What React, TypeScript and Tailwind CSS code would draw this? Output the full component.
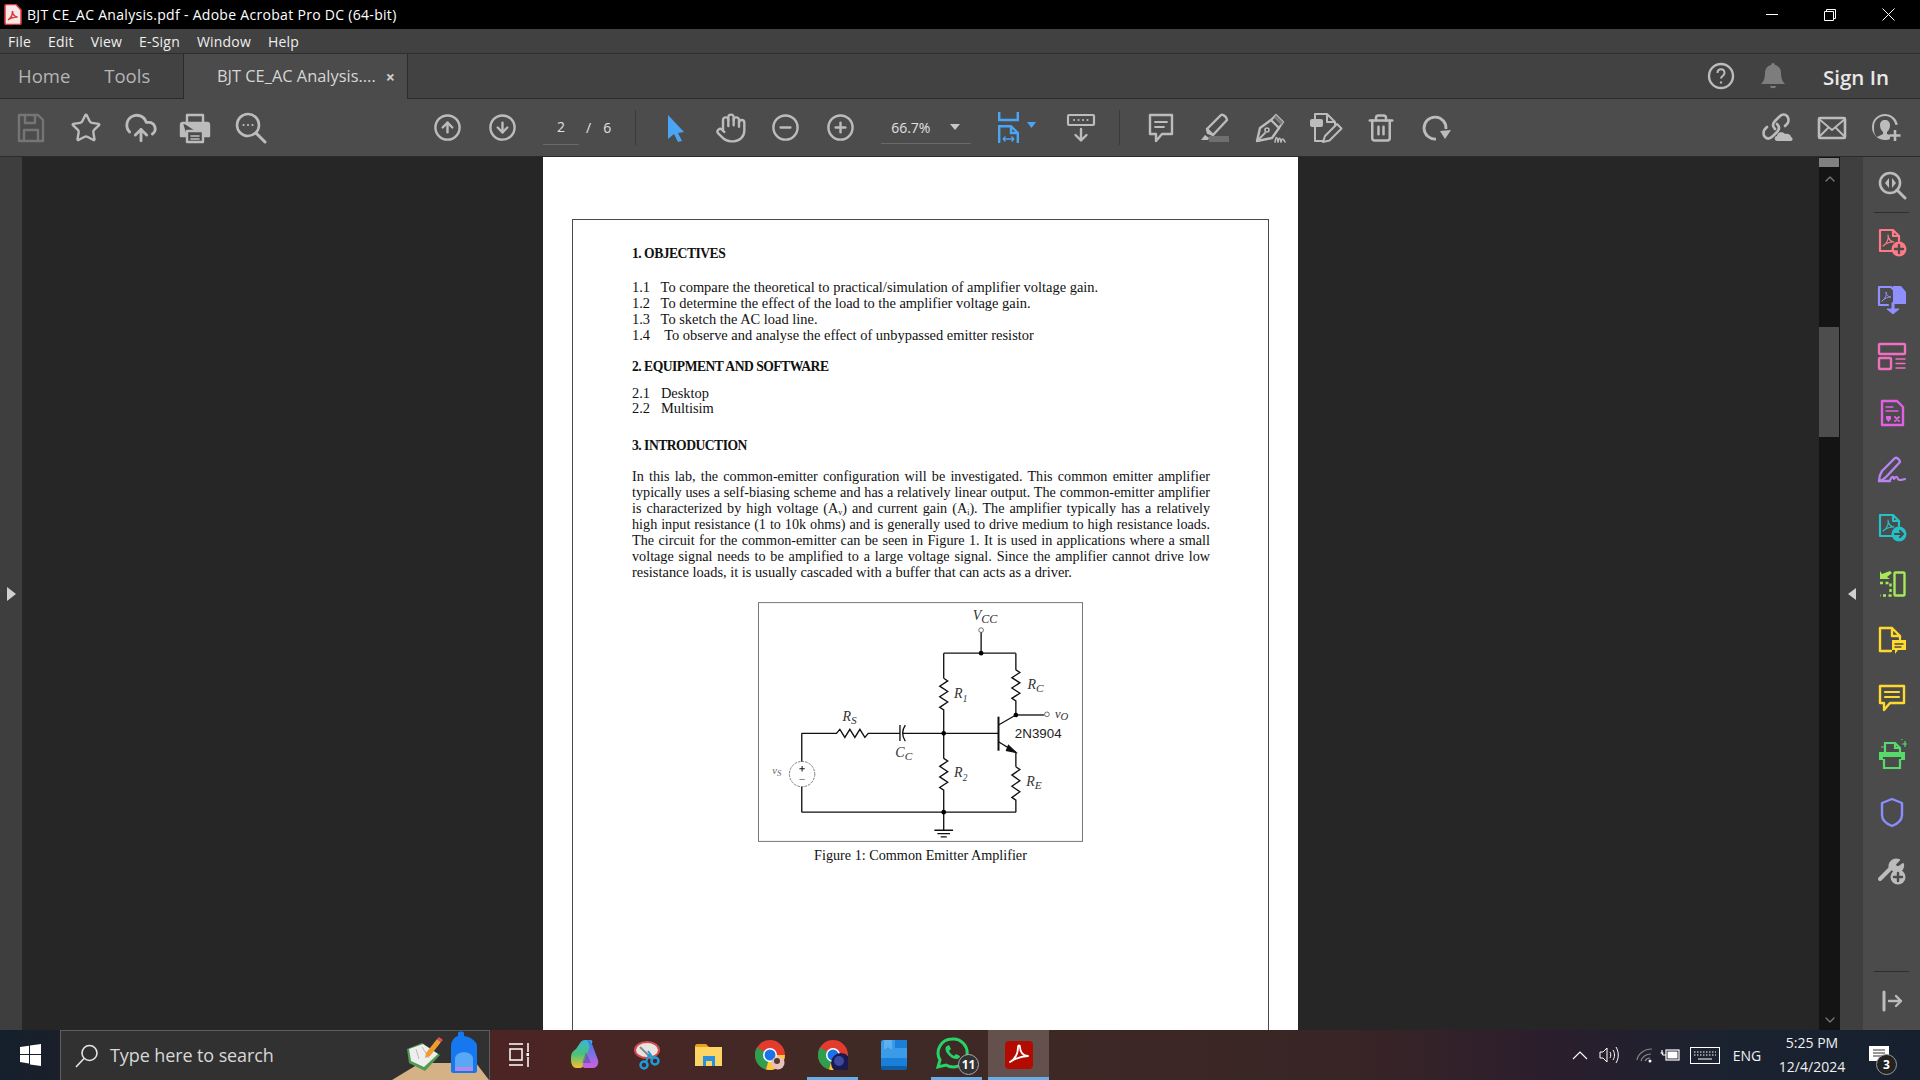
import React from "react";
import { Star, CloudUpload, CircleArrowUp, CircleArrowDown, Hand, CircleMinus, CirclePlus, Trash2, ChevronUp, ChevronDown } from "lucide-react";

const ui = "font-['Open_Sans','Noto_Sans',sans-serif]";

function S({ w = 36, h = 36, vb, children, className = "" }: { w?: number; h?: number; vb?: string; children: React.ReactNode; className?: string }) {
  return (
    <svg width={w} height={h} viewBox={vb ?? `0 0 ${w} ${h}`} fill="none" stroke="currentColor" strokeWidth={2.4} strokeLinecap="round" strokeLinejoin="round" className={className}>
      {children}
    </svg>
  );
}

const Slot = ({ x, children }: { x: number; children: React.ReactNode }) => (
  <div className="flex h-full items-center justify-center" style={{ width: x }}>
    {children}
  </div>
);

function Save() {
  return <S><path d="M6 5h19l5 5v21H6z" /><path d="M12 5v8h10V5M11 31v-11h14v11" /></S>;
}
function Printer() {
  return (
    <S>
      <path d="M10 13V5h16v8" />
      <path d="M6 13h24a2 2 0 0 1 2 2v11h-6M10 26H4V15a2 2 0 0 1 2-2" fill="currentColor" />
      <rect x="10" y="21" width="16" height="11" fill="#4c4c4c" />
      <path d="M14 26h8M14 29h8" strokeWidth={1.6} />
    </S>
  );
}
function SearchDots() {
  return (
    <S>
      <circle cx="15" cy="15" r="11" strokeWidth={2.6} />
      <path d="M23 23l9 9" strokeWidth={3} />
      <path d="M10.5 15h.1M15 15h.1M19.5 15h.1" strokeWidth={2.2} />
    </S>
  );
}
function Cursor() {
  return <svg width="22" height="30" viewBox="0 0 22 30"><path d="M3 2l16 17-6 1 4 8-4 1-4-8-6 5z" fill="#4aa5f5" /></svg>;
}
function Fit() {
  return (
    <svg width="21" height="31" viewBox="0 0 21 31" fill="none" stroke="#4aa5f5" strokeWidth="2.4">
      <path d="M1.200 0v8h18.600V0" />
      <path d="M1.200 31V14.200H13l6.800 6.800v10M13 14.200V21h6.800" />
      <path d="M5 27h11M5 27l2.500-2.500M5 27l2.500 2.500M16 27l-2.500-2.500M16 27l-2.500 2.500" strokeWidth="1.400" />
    </svg>
  );
}
function Kb() {
  return (
    <S w={30} h={32}>
      <rect x="2" y="3" width="26" height="10" rx="1" strokeWidth={2.2} />
      <path d="M8 8h.1M12.500 8h.1M17 8h.1M21.500 8h.1" strokeWidth={2} />
      <path d="M15 17v11M9.500 23l5.500 5.500 5.500-5.500" />
    </S>
  );
}
function Comment() {
  return (
    <S w={28} h={32}>
      <path d="M3 3h22v19H15l-6 7v-7H3z" />
      <path d="M8 10h12M8 15h9" strokeWidth={1.8} />
    </S>
  );
}
function Highlight() {
  return (
    <S w={32} h={32}>
      <path d="M8 21l-1-4L21 3c2-1 6 2 6 5L13 23z" />
      <path d="M7 17l6 6" />
      <path d="M1 28l4-5 4 3-1 2z" fill="currentColor" stroke="none" />
      <rect x="9" y="24" width="20" height="6" fill="#6f6f6f" stroke="none" />
    </S>
  );
}
function Pen() {
  return (
    <S w={34} h={32}>
      <path d="M3 29l3-13 11-8 8 8-7 10z" />
      <path d="M3 29l8-8" strokeWidth={1.8} />
      <circle cx="13" cy="18" r="2" strokeWidth={1.6} />
      <path d="M17 8l5-5 7 7-4 6" strokeWidth={2.2} />
      <path d="M22 3l7 7-2 3-7-7z" fill="#7a7a7a" stroke="none" />
      <path d="M21 30c1-6 2-6 3 0 1-5 2-5 3 0 1-4 2-4 4 0" strokeWidth={1.6} />
    </S>
  );
}
function EditDoc() {
  return (
    <S w={34} h={32}>
      <path d="M6 7V2h12l8 8v3M18 2v8h8" strokeWidth={2} />
      <rect x="1" y="7" width="13" height="8" rx="2" fill="currentColor" stroke="none" />
      <path d="M6 15v14h8" strokeWidth={2} />
      <path d="M14 30l2-6 12-12 4.500 4.500-12 12z" strokeWidth={2} />
    </S>
  );
}
function Rotate() {
  return (
    <svg width="30" height="30" viewBox="0 0 30 30" fill="none">
      <path d="M15 26A11 11 0 1 1 25 16" stroke="#bcbcbc" strokeWidth="2.800" />
      <path d="M19 18l11-1-6 9z" fill="#bcbcbc" />
    </svg>
  );
}
function LinkCloud() {
  return (
    <S w={34} h={34}>
      <path d="M15 18c-3-3-2-6 0-8l4-4c3-3 6-3 8-1s2 6 0 8l-2 2" strokeWidth={2.6} />
      <path d="M17 13c3 3 2 6 0 8l-4 4c-3 3-6 3-8 1s-2-6 0-8l2-2" strokeWidth={2.6} />
      <path d="M17 30c-3 0-3-5 0-5 0-4 6-5 8-2 3-1 6 1 6 3 2 0 2 4 0 4z" fill="currentColor" stroke="none" />
    </S>
  );
}
function MailBox() {
  return (
    <S w={30} h={24}>
      <rect x="2" y="2" width="26" height="20" rx="1" strokeWidth={2.6} />
      <path d="M2 3l13 11L28 3M2 21l9-9M28 21l-9-9" strokeWidth={1.8} />
    </S>
  );
}
function UserPlus() {
  return (
    <svg width="32" height="30" viewBox="0 0 32 30">
      <path d="M14 1a13 13 0 0 0 0 26c2 0 3.500-.3 5-1v-4l-3-1v-2c2-2 3-4 3-7 0-3-2-5-5-5s-5 2-5 5c0 3 1 5 3 7v2l-6 3C3 21 3 18 3 14 3 7 8 3 14 3s9 4 10.500 9l2.500-.5A13 13 0 0 0 14 1z" fill="#bcbcbc" />
      <path d="M24 17v11M18.500 22.500h11" stroke="#bcbcbc" strokeWidth="2.600" />
    </svg>
  );
}

function RightIcon({ c, children }: { c: string; children: React.ReactNode }) {
  return (
    <div className="flex h-[57.1px] w-full items-center justify-center" style={{ color: c }}>
      {children}
    </div>
  );
}

function RightPanel() {
  return (
    <div className="flex h-full w-[57px] flex-col items-center bg-[#4b4b4b]">
      <div className="flex h-[55px] w-full shrink-0 items-center justify-center text-[#bcbcbc]">
        <S w={30} h={30}>
          <circle cx="13" cy="13" r="10" strokeWidth={2.6} />
          <path d="M20 20l8 8" strokeWidth={3} />
          <path d="M12 8l-4 5 4 5zM15 8l4 5-4 5z" fill="currentColor" stroke="none" />
        </S>
      </div>
      <div className="h-px w-[35px] shrink-0 bg-[#2e2e2e]" />
      <div className="flex w-full flex-col">
        <RightIcon c="#ff7a85">
          <S w={30} h={30}>
            <path d="M18 24H3V3h13l6 6v5M16 3v6h6" strokeWidth={2.2} />
            <path d="M6 19c4-2 6-8 5-11 0 4 3 7 6 7-4 0-8 1-11 4z" strokeWidth={1.2} />
            <circle cx="22" cy="22" r="7.500" fill="currentColor" stroke="none" />
            <path d="M22 18v8M18 22h8" stroke="#4b4b4b" strokeWidth={2.4} />
          </S>
        </RightIcon>
        <RightIcon c="#8f8fff">
          <S w={32} h={32}>
            <path d="M12 22H3V4h12l3 3v4" strokeWidth={2.2} />
            <path d="M6 18c3-2 5-6 4-9 0 3 2 5 5 5-3 0-6 1-9 4z" strokeWidth={1} />
            <path d="M17 3h8l5 6v12H17z" fill="currentColor" stroke="none" />
            <path d="M16 20v6h-5l6 5 6-5h-5v-6z" fill="currentColor" stroke="currentColor" strokeWidth={1} />
          </S>
        </RightIcon>
        <RightIcon c="#f06fc0">
          <S w={30} h={30}>
            <rect x="2" y="3" width="26" height="10" rx="1" strokeWidth={2.4} />
            <rect x="2" y="17" width="12" height="11" rx="1" strokeWidth={2.4} />
            <path d="M19 18h9M19 22.500h9M19 27h9" strokeWidth={1.4} />
          </S>
        </RightIcon>
        <RightIcon c="#e35fe6">
          <S w={26} h={30}>
            <path d="M3 3h15l6 6v18H3z" strokeWidth={2.4} />
            <path d="M7 9h7M7 13h12" strokeWidth={1.4} />
            <path d="M7 18h5v3l-2.500 3L7 21z" fill="currentColor" stroke="none" />
            <path d="M16 19l4 4M20 19l-4 4" strokeWidth={1.8} />
          </S>
        </RightIcon>
        <RightIcon c="#b983f0">
          <S w={32} h={30}>
            <path d="M3 26c0-4 1-7 3-10L19 3c2-1 5 2 5 4L11 21c-2 2-5 5-8 5z" strokeWidth={2.4} />
            <path d="M3 26h11" strokeWidth={2.4} />
            <path d="M14 25c2-4 4-4 4-1 2-3 3-3 4 0 1 2 3 1 7 0" strokeWidth={2.2} />
          </S>
        </RightIcon>
        <RightIcon c="#26c0c9">
          <S w={30} h={30}>
            <path d="M16 24H3V3h13l6 6v5M16 3v6h6" strokeWidth={2.2} />
            <path d="M6 19c4-2 6-8 5-11 0 4 3 7 6 7-4 0-8 1-11 4z" strokeWidth={1.2} />
            <circle cx="22" cy="22" r="7.500" fill="currentColor" stroke="none" />
            <path d="M18 22h8M23 19l3 3-3 3" stroke="#4b4b4b" strokeWidth={2.2} />
          </S>
        </RightIcon>
        <RightIcon c="#a5ea55">
          <svg width="28" height="26" viewBox="0 0 28 26" fill="none" stroke="currentColor">
            <rect x="16.500" y="1.500" width="10" height="23" rx="1" strokeWidth="2.400" />
            <path d="M2 12h10.500v12.500H2" strokeWidth="2.400" strokeDasharray="3 2.500" />
            <path d="M12 0l2 2-5 4 3 2H2V0l2 3z" fill="currentColor" stroke="none" />
          </svg>
        </RightIcon>
        <RightIcon c="#ffd92e">
          <S w={30} h={32}>
            <path d="M14 26H3V3h12l8 8v3M15 3v8h8" strokeWidth={2.4} />
            <path d="M15 15h14v10h-8l-3 4v-4h-3z" fill="currentColor" stroke="none" />
            <path d="M18 19h8M18 22h6" stroke="#4b4b4b" strokeWidth={1.4} />
          </S>
        </RightIcon>
        <RightIcon c="#ffd92e">
          <S w={28} h={28}>
            <path d="M2 2h24v17H12l-6 7v-7H2z" strokeWidth={2.4} />
            <path d="M7 8h14M7 13h14" strokeWidth={2.2} />
          </S>
        </RightIcon>
        <RightIcon c="#57d96b">
          <svg width="30" height="32" viewBox="0 0 30 32" fill="none" stroke="currentColor" strokeWidth="2.200">
            <path d="M8 13V4h10l5 5v4M18 4v5h5" />
            <path d="M2 13h26v8h-4v-3H6v3H2z" fill="currentColor" stroke="none" />
            <path d="M7 20v9h16v-9" />
            <path d="M28 2v6M25 5h6M4 8h3M25 0v1" strokeWidth="1.200" />
          </svg>
        </RightIcon>
        <RightIcon c="#8a8cff">
          <S w={26} h={32}>
            <path d="M13 3l10 4v12c0 5-5 9-10 11C8 28 3 24 3 19V7z" strokeWidth={2.4} />
          </S>
        </RightIcon>
        <RightIcon c="#bcbcbc">
          <S w={30} h={30}>
            <path d="M3 24l11-11" strokeWidth={4} />
            <path d="M13 14c-2-6 3-11 9-9l-4 4 1 3 3 0 4-3c1 5-4 10-9 8" strokeWidth={2} fill="currentColor" />
            <circle cx="21" cy="22" r="7.500" fill="currentColor" stroke="none" />
            <path d="M21 18v8M17 22h8" stroke="#4b4b4b" strokeWidth={2.4} />
          </S>
        </RightIcon>
      </div>
      <div className="mt-auto h-px w-[35px] shrink-0 bg-[#2e2e2e]" />
      <div className="flex h-[58px] shrink-0 items-center justify-center text-[#bcbcbc]">
        <S w={22} h={24}>
          <path d="M3 3v18" strokeWidth={3} />
          <path d="M8 12h12M15 7l5 5-5 5" />
        </S>
      </div>
    </div>
  );
}

const serif = "font-['Liberation_Serif','DejaVu_Serif',serif]";

function Line({ children, just = false, h = 16, cls = "" }: { children: React.ReactNode; just?: boolean; h?: number; cls?: string }) {
  return (
    <div className={`whitespace-nowrap ${just ? "text-justify text-[14.2px] [text-align-last:justify]" : ""} ${cls}`} style={{ height: h, lineHeight: `${h}px` }}>
      {children}
    </div>
  );
}

function zig(x: number, y0: number, y1: number) {
  const step = (y1 - y0) / 12;
  let d = `M${x} ${y0}`;
  for (let i = 0; i < 6; i++) {
    d += `L${x + (i % 2 ? -12 : 12)} ${y0 + step * (2 * i + 1)}`;
  }
  return d + `L${x} ${y1}`;
}

function Circuit() {
  const w = "#111";
  return (
    <svg width="325" height="240" viewBox="55 37 973 718" className="block" fill="none" stroke={w} strokeWidth="4">
      <rect x="56.500" y="38.500" width="970" height="715" stroke="#777" strokeWidth="3" />
      <circle cx="723" cy="121" r="7" stroke="#555" strokeWidth="2.500" />
      <path d="M723 128v62M611 190h216" />
      <path d={`M611 190V265${zig(611, 265, 360)}V430`} />
      <path d={`M827 190V240${zig(827, 240, 333)}V375`} />
      <path d="M827 375h85" />
      <circle cx="920" cy="373" r="7" stroke="#555" strokeWidth="2.500" />
      <path d="M775 380v102" strokeWidth="6" />
      <path d="M611 430h164M775 405l52-30M775 455l52 32" />
      <path d="M805 466l22 21-28-6z" fill={w} />
      <path d={`M827 487V530${zig(827, 530, 630)}V666`} />
      <path d="M186 666h641M611 666v52M583 720h56M592 730h38M602 740h18" />
      <path d={`M611 430V505${zig(611, 505, 600)}V666`} />
      <path d="M186 430h104l10-12 15 24 15-24 15 24 15-24 15 24 10-12h95M480 405v48M496 405c-10 15-10 33 0 48M490 430h121" />
      <circle cx="187" cy="552" r="38" stroke="#666" strokeWidth="2.500" strokeDasharray="8 3" />
      <path d="M186 430v84M186 590v76" />
      <path d="M187 528v16M179 536h16" strokeWidth="3" />
      <path d="M179 568h16" stroke="#888" strokeWidth="3" />
      <g fill="#000" stroke="none">
        <circle cx="723" cy="190" r="7" />
        <circle cx="827" cy="375" r="7" />
        <circle cx="611" cy="430" r="7" />
        <circle cx="611" cy="666" r="7" />
      </g>
      <g fill="#333" stroke="none" fontFamily="'Liberation Serif', serif" fontStyle="italic" fontSize="42">
        <text x="698" y="92">V<tspan fontSize="36" dy="8">CC</tspan></text>
        <text x="642" y="325">R<tspan fontSize="28" dy="10">1</tspan></text>
        <text x="862" y="296">R<tspan fontSize="34" dy="10">C</tspan></text>
        <text x="308" y="393">R<tspan fontSize="34" dy="10">S</tspan></text>
        <text x="642" y="562">R<tspan fontSize="28" dy="10">2</tspan></text>
        <text x="858" y="588">R<tspan fontSize="34" dy="10">E</tspan></text>
        <text x="466" y="500">C<tspan fontSize="34" dy="10">C</tspan></text>
        <text x="944" y="384" fontSize="38">v<tspan fontSize="32" dy="5">O</tspan></text>
        <text x="98" y="552" fontSize="32" fill="#666">v<tspan fontSize="26" dy="6">S</tspan></text>
      </g>
      <text x="824" y="444" fill="#222" stroke="none" fontFamily="'Liberation Sans', sans-serif" fontSize="40">2N3904</text>
    </svg>
  );
}

const head = "font-bold text-[13.6px] tracking-[-0.5px]";

function Page() {
  return (
    <div className={`h-[873px] w-[755px] shrink-0 overflow-hidden bg-white pl-[29px] pt-[62px] text-[#111] ${serif} text-[14.45px]`}>
      <div className="h-[900px] w-[697px] border border-[#4a4a4a] pl-[59px] pt-[26px]">
        <div className="w-[578px]">
          <Line cls={head}>1. OBJECTIVES</Line>
          <div className="mt-[17px]">
            <Line>1.1&nbsp;&nbsp; To compare the theoretical to practical/simulation of amplifier voltage gain.</Line>
            <Line>1.2&nbsp;&nbsp; To determine the effect of the load to the amplifier voltage gain.</Line>
            <Line>1.3&nbsp;&nbsp; To sketch the AC load line.</Line>
            <Line>1.4&nbsp;&nbsp;&nbsp; To observe and analyse the effect of unbypassed emitter resistor</Line>
          </div>
          <Line cls={`mt-[16px] ${head}`}>2. EQUIPMENT AND SOFTWARE</Line>
          <div className="mt-[10px]">
            <Line>2.1&nbsp;&nbsp; Desktop</Line>
            <Line h={15}>2.2&nbsp;&nbsp; Multisim</Line>
          </div>
          <Line cls={`mt-[22px] ${head}`}>3. INTRODUCTION</Line>
          <div className="mt-[14px]">
            <Line just>In this lab, the common-emitter configuration will be investigated. This common emitter amplifier</Line>
            <Line just>typically uses a self-biasing scheme and has a relatively linear output. The common-emitter amplifier</Line>
            <Line just>is characterized by high voltage (A<sub className="text-[8px]">v</sub>) and current gain (A<sub className="text-[8px]">i</sub>). The amplifier typically has a relatively</Line>
            <Line just>high input resistance (1 to 10k ohms) and is generally used to drive medium to high resistance loads.</Line>
            <Line just>The circuit for the common-emitter can be seen in Figure 1. It is used in applications where a small</Line>
            <Line just>voltage signal needs to be amplified to a large voltage signal. Since the amplifier cannot drive low</Line>
            <Line>resistance loads, it is usually cascaded with a buffer that can acts as a driver.</Line>
          </div>
        </div>
        <div className="ml-[126px] mt-[22px] w-[325px]">
          <Circuit />
          <Line cls="mt-[5px] text-center text-[14.2px]">Figure 1: Common Emitter Amplifier</Line>
        </div>
      </div>
    </div>
  );
}

function Windows() {
  return (
    <svg width="21" height="22" viewBox="0 0 21 22" fill="#fff">
      <path d="M0 3l9-1.300V10H0zM10 1.500L21 0v10H10zM0 11h9v8.500L0 18zM10 11h11v11l-11-1.600z" />
    </svg>
  );
}

function Chrome({ extra }: { extra: React.ReactNode }) {
  return (
    <svg width="30" height="30" viewBox="0 0 30 30">
      <circle cx="15" cy="15" r="15" fill="#e33b2e" />
      <path d="M15 15L2 7.500A15 15 0 0 0 11 29.500z" fill="#2e9e4f" />
      <path d="M15 15h15A15 15 0 0 1 11 29.500z" fill="#fcc934" />
      <circle cx="15" cy="15" r="7" fill="#fff" />
      <circle cx="15" cy="15" r="5.500" fill="#1a73e8" />
      {extra}
    </svg>
  );
}

function Copilot() {
  return (
    <svg width="32" height="32" viewBox="0 0 32 32">
      <defs>
        <linearGradient id="cpA" x1="0" y1="0" x2="0" y2="1">
          <stop offset="0" stopColor="#38b6d8" />
          <stop offset="0.5" stopColor="#4ac27a" />
          <stop offset="1" stopColor="#f5c030" />
        </linearGradient>
        <linearGradient id="cpB" x1="0" y1="0" x2="0" y2="1">
          <stop offset="0" stopColor="#2f7fe8" />
          <stop offset="1" stopColor="#d060e0" />
        </linearGradient>
      </defs>
      <path d="M3 18c0-4 2-6 5-8l4-6c1-2 3-3 5-3h5c2 0 3 1 2 3l-8 22c-1 2-2 3-4 3H8c-3 0-5-4-5-8z" fill="url(#cpA)" />
      <path d="M19 1c3 0 4 2 5 4l6 16c1 4-1 8-5 8h-8c-2 0-3-2-2-4l6-15c1-3 0-6-2-9z" fill="url(#cpB)" />
      <path d="M14 24l4-11 5 11z" fill="#2c2f8f" opacity="0.35" />
    </svg>
  );
}

function Taskbar() {
  return (
    <div className={`flex h-[50px] shrink-0 items-center bg-[linear-gradient(90deg,#14202c_0%,#1a1f2a_3%,#4c2424_26%,#3f2a26_45%,#3a2526_70%,#2c1e2c_80%,#1a2230_90%,#17202e_100%)] text-white ${ui}`}>
      <div className="flex h-full w-[60px] shrink-0 items-center justify-center"><Windows /></div>
      <div className="flex h-full w-[430px] shrink-0 items-center overflow-hidden border border-b-0 border-[#5e5e5e] bg-[#313131] pl-[12px]">
        <svg width="28" height="28" viewBox="0 0 28 28" fill="none" stroke="#e6e6e6" strokeWidth="1.600"><circle cx="16.500" cy="11" r="7.500" /><path d="M11 16.500L3 25" /></svg>
        <span className="ml-[9px] text-[18px] tracking-[-0.1px] text-[#d8d8d8]">Type here to search</span>
        <svg width="97" height="49" viewBox="0 0 97 49" className="ml-auto shrink-0">
          <path d="M0 49l28-17h56l13 17z" fill="#d4b285" />
          <path d="M15 18l15-6 18 12-15 16-16-8z" fill="#4f9b4f" />
          <path d="M17 18l14-5 15 10-14 13-13-6z" fill="#eee" />
          <path d="M24 18l3 10M30 16l7 11" stroke="#bbb" strokeWidth="1" />
          <path d="M34 22l11-14 4 3-11 14-5 2z" fill="#f09a30" />
          <path d="M45 8l2-2 4 3-2 2z" fill="#e05050" />
          <path d="M59 40V15c0-6 5-10 7-10V2c0-2 6-2 6 0v3c3 0 13 4 13 10v25c0 1-1 2-2 2H61c-1 0-2-1-2-2z" fill="#1578ee" />
          <path d="M63 40V28c0-9 18-9 18 0v12z" fill="#5aa8f5" />
          <path d="M63 36h18v4H63z" fill="#b08ae8" />
        </svg>
      </div>
      <div className="flex h-full w-[58px] shrink-0 items-center justify-center">
        <svg width="20" height="24" viewBox="0 0 20 24" fill="none" stroke="#fff" strokeWidth="1.500"><path d="M0 1h14M0 22h14M1 6h12v11H1zM19 0v9M19 14v10" /><rect x="17.500" y="10" width="3" height="3" fill="#fff" stroke="none" /></svg>
      </div>
      <div className="flex h-full w-[72px] shrink-0 items-center justify-center"><Copilot /></div>
      <div className="flex h-full w-[54px] shrink-0 items-center justify-center">
        <svg width="30" height="32" viewBox="0 0 30 32" fill="none">
          <ellipse cx="15" cy="11" rx="12" ry="8" fill="#e8e4e2" stroke="#d04c4c" strokeWidth="2" />
          <path d="M8 8l12 12" stroke="#888" strokeWidth="2" />
          <circle cx="12" cy="26" r="3.500" stroke="#1d9bdc" strokeWidth="2.500" />
          <circle cx="23" cy="22" r="3.500" stroke="#1d9bdc" strokeWidth="2.500" />
          <path d="M14 23l4-9M21 19l-5-7" stroke="#1d9bdc" strokeWidth="2" />
        </svg>
      </div>
      <div className="flex h-full w-[68px] shrink-0 items-center justify-center">
        <svg width="29" height="24" viewBox="0 0 29 24"><path d="M1 3c0-1 1-2 2-2h9l3 3H1z" fill="#e8a020" /><path d="M1 4h27v19H1z" fill="#fcd565" /><path d="M9 13h12v10h-3v-5h-6v5H9z" fill="#2b8fe0" /></svg>
      </div>
      <div className="flex h-full w-[56px] shrink-0 items-center justify-center">
        <Chrome extra={<><circle cx="23" cy="23" r="6.500" fill="#e8c0c0" /><circle cx="22" cy="21" r="3" fill="#5b3a2a" /></>} />
      </div>
      <div className="relative flex h-full w-[70px] shrink-0 items-center justify-center">
        <Chrome extra={<><circle cx="23" cy="23" r="10" fill="#1a1a50" /><circle cx="21" cy="21" r="5" fill="#3a4aa0" /></>} />
        <div className="absolute bottom-0 left-[9px] h-[3px] w-[51px] bg-[#69ade8]" />
      </div>
      <div className="flex h-full w-[52px] shrink-0 items-center justify-center">
        <svg width="26" height="30" viewBox="0 0 26 30"><path d="M2 0h22c1 0 2 1 2 2v24H0V2c0-1 1-2 2-2z" fill="#3a9be8" /><path d="M0 26h26v2c0 1-1 2-2 2H2c-1 0-2-1-2-2z" fill="#0f5ea8" /><path d="M14 0h12v8H14zM0 18h26v8H0z" fill="#1a7fd8" /><path d="M3 0h8v10l-4-3-4 3z" fill="#5eb1ee" /></svg>
      </div>
      <div className="relative flex h-full w-[68px] shrink-0 items-center justify-center">
        <svg width="34" height="34" viewBox="0 0 34 34" className="-translate-x-[2px] -translate-y-[2px]">
          <path d="M17 3a14 14 0 0 0-12 21L3 31l8-2a14 14 0 1 0 6-26z" fill="none" stroke="#25d366" strokeWidth="3" />
          <path d="M12 10c-2 1-2 4 0 7s6 6 9 6 4-2 4-3l-4-2-2 2c-2-1-4-3-5-5l2-2-2-4z" fill="#25d366" />
        </svg>
        <div className="absolute left-[38px] top-[24px] flex h-[21px] w-[21px] items-center justify-center rounded-full border border-[#aaa] bg-[#333] text-[12px] font-bold leading-none">11</div>
        <div className="absolute bottom-0 left-[11px] h-[3px] w-[51px] bg-[#69ade8]" />
      </div>
      <div className="relative flex h-full w-[61px] shrink-0 items-center justify-center bg-[#64504c]">
        <svg width="28" height="28" viewBox="0 0 28 28"><rect width="28" height="28" rx="4" fill="#b30b00" /><path d="M5 21c5-3 8-9 8-15 0-2 2-2 2 0 0 5 3 9 8 9-6 0-12 2-18 6z" fill="none" stroke="#fff" strokeWidth="1.800" strokeLinejoin="round" /></svg>
        <div className="absolute inset-x-0 bottom-0 h-[3px] bg-[#69ade8]" />
      </div>
      <div className="ml-auto flex h-full items-center">
        <div className="flex w-[32px] items-center justify-center">
          <svg width="16" height="10" viewBox="0 0 16 10" fill="none" stroke="#fff" strokeWidth="1.200"><path d="M1 9l7-7 7 7" /></svg>
        </div>
        <div className="ml-[1px] flex w-[26px] items-center justify-center">
          <svg width="22" height="18" viewBox="0 0 22 18" fill="none" stroke="#fff" strokeWidth="1"><path d="M1 6h3l4-4v14l-4-4H1zM11 6c1 2 1 4 0 6M14 4c2 3 2 7 0 10M17 1c3 5 3 11 0 16" /></svg>
        </div>
        <div className="ml-[12px] flex w-[20px] items-center justify-center">
          <svg width="18" height="16" viewBox="0 0 18 16" fill="none" stroke="#888" strokeWidth="1.200"><path d="M1 13C2 7 8 2 16 2M5 14c1-4 5-7 10-7M9 14c1-2 3-3 5-3" /><circle cx="14" cy="14" r="1.500" fill="#fff" stroke="none" /></svg>
        </div>
        <div className="flex w-[30px] items-center justify-center">
          <svg width="20" height="14" viewBox="0 0 20 14" fill="none" stroke="#fff" strokeWidth="1.200"><path d="M0.500 5h3M2 2v3l1 2h3" /><rect x="6" y="2" width="13" height="10" /><rect x="7.500" y="3.500" width="10" height="7" fill="#fff" stroke="none" /></svg>
        </div>
        <div className="ml-[4px] flex w-[32px] items-center justify-center">
          <svg width="30" height="17" viewBox="0 0 30 17" fill="none" stroke="#fff" strokeWidth="1"><rect x=".5" y=".5" width="29" height="16" /><path d="M4 5h22M4 8h22" strokeDasharray="1.500 1.500" /><path d="M8 12h14" /></svg>
        </div>
        <div className="ml-[8px] w-[36px] text-center text-[14px] text-[#f0f0f0]">ENG</div>
        <div className="ml-[13px] w-[68px] text-center text-[14px] leading-[24px] text-[#f0f0f0]">
          <div>5:25 PM</div>
          <div>12/4/2024</div>
        </div>
        <div className="relative ml-[21px] mr-[29px] flex w-[24px] items-center justify-center">
          <svg width="20" height="18" viewBox="0 0 20 18"><path d="M0 0h20v15H0z" fill="#fff" /><path d="M4 4h12M4 7h12M4 10h12" stroke="#333" strokeWidth="1" /></svg>
          <div className="absolute left-[9px] top-[8px] flex h-[21px] w-[21px] items-center justify-center rounded-full border border-[#999] bg-[#222] text-[12px] font-bold leading-none">3</div>
        </div>
      </div>
    </div>
  );
}

export default function App() {
  return (
    <div className={`flex h-[1080px] w-[1920px] flex-col overflow-hidden bg-[#262626] ${ui}`}>
      {/* title */}
      <div className="flex h-[29px] shrink-0 items-center bg-black text-white">
        <svg width="18" height="21" viewBox="0 0 18 21" className="ml-[4px]"><path d="M1 2c0-1 .5-1.500 1.500-1.500H12L17 6v13c0 1-.5 1.500-1.500 1.500h-13C1.500 20.500 1 20 1 19z" fill="#f4e8e8" stroke="#e0383a" strokeWidth="1.500" /><path d="M4 16c3-2 4.500-5 4.500-9 0 3 2 5.500 5 6-3.500 0-7 1-9.500 3z" fill="none" stroke="#e0383a" strokeWidth="1.500" /></svg>
        <span className="ml-[5px] text-[14px] tracking-[0.3px]">BJT CE_AC Analysis.pdf - Adobe Acrobat Pro DC (64-bit)</span>
        <div className="ml-auto mr-[3px] flex h-full items-center">
          <div className="flex w-[58px] justify-center"><div className="h-px w-[12px] bg-white" /></div>
          <div className="flex w-[58px] justify-center">
            <svg width="12" height="12" viewBox="0 0 12 12" fill="none" stroke="#fff"><path d="M.5 2.500h9v9h-9zM2.500 2.500v-2h9v9h-2" /></svg>
          </div>
          <div className="flex w-[58px] justify-center">
            <svg width="13" height="13" viewBox="0 0 13 13" fill="none" stroke="#fff"><path d="M.5.500l12 12M12.500.500l-12 12" /></svg>
          </div>
        </div>
      </div>
      {/* menu */}
      <div className="flex h-[25px] shrink-0 items-center gap-[17px] border-b border-[#2e2e2e] bg-[#414141] pl-[8px] text-[14px] tracking-[0.2px] text-[#efefef]">
        {["File", "Edit", "View", "E-Sign", "Window", "Help"].map((m) => <span key={m}>{m}</span>)}
      </div>
      {/* tabs */}
      <div className="flex h-[45px] shrink-0 items-stretch border-b border-[#2b2b2b] bg-[#424242]">
        <div className="flex w-[184px] items-center border-r border-[#2b2b2b] pl-[18px] text-[18.5px] text-[#b5b5b5]">
          <span>Home</span><span className="ml-[34px]">Tools</span>
        </div>
        <div className="-mb-px flex w-[224px] items-center border-r border-[#2b2b2b] bg-[#4b4b4b] pl-[33px] text-[16.4px] text-[#d6d6d6]">
          <span>BJT CE_AC Analysis....</span>
          <span className="ml-[10px] text-[16px] font-bold leading-none text-[#cfcfcf]">×</span>
        </div>
        <div className="ml-auto flex items-center pr-[31px] text-[#c0c0c0]">
          <svg width="28" height="28" viewBox="0 0 28 28" fill="none" stroke="#bcbcbc" strokeWidth="2.400"><circle cx="14" cy="14" r="12" /><path d="M10.500 11c0-5 7-5 7 0 0 3-3.500 3-3.500 5.500" strokeWidth="2" /><path d="M14 19.500v2" strokeWidth="2.200" /></svg>
          <svg width="24" height="26" viewBox="0 0 24 26" className="ml-[26px]" fill="#7d7d7d"><path d="M12 0a2 2 0 0 1 2 2c4 1 6 4 6 8 0 5 1 8 4 11H0c3-3 4-6 4-11 0-4 2-7 6-8a2 2 0 0 1 2-2z" /><path d="M9 23h6c0 3-6 3-6 0z" /></svg>
          <span className="ml-[38px] mt-[3px] text-[20.5px] font-semibold text-[#e8e8e8]">Sign In</span>
        </div>
      </div>
      {/* toolbar */}
      <div className="flex h-[58px] shrink-0 items-center border-b border-[#2b2b2b] bg-[#4c4c4c] text-[#bcbcbc]">
        <div className="ml-[4px] flex h-full items-center">
          <Slot x={54}><div className="text-[#757575]"><Save /></div></Slot>
          <Slot x={55}><Star size={32} strokeWidth={1.8} /></Slot>
          <Slot x={55}><CloudUpload size={34} strokeWidth={2} /></Slot>
          <Slot x={54}><Printer /></Slot>
          <Slot x={57}><SearchDots /></Slot>
        </div>
        <div className="ml-[141px] flex h-full items-center">
          <Slot x={55}><CircleArrowUp size={29} strokeWidth={2} /></Slot>
          <Slot x={55}><CircleArrowDown size={29} strokeWidth={2} /></Slot>
        </div>
        <div className="ml-[13px] flex w-[36px] justify-center border-b border-[#6a6a6a] pb-[7px] pt-[6px] text-[14px] leading-[20px] text-[#e0e0e0]">2</div>
        <span className="ml-[7px] text-[14px] text-[#e0e0e0]">/</span>
        <span className="ml-[12px] text-[14px] text-[#e0e0e0]">6</span>
        <div className="ml-[24px] h-[35px] w-px bg-[#3a3a3a]" />
        <div className="ml-[12px] flex h-full items-center">
          <Slot x={55}><Cursor /></Slot>
          <Slot x={55}><Hand size={32} strokeWidth={1.8} /></Slot>
          <Slot x={55}><CircleMinus size={29} strokeWidth={2} /></Slot>
          <Slot x={55}><CirclePlus size={29} strokeWidth={2} /></Slot>
        </div>
        <div className="ml-[13px] flex h-[33px] w-[90px] items-center border-b border-[#6a6a6a] pl-[10px] text-[14px] text-[#e0e0e0]">
          <span>66.7%</span>
          <svg width="10" height="6" viewBox="0 0 10 6" className="ml-[20px]"><path d="M0 0h10L5 6z" fill="#c8c8c8" /></svg>
        </div>
        <div className="ml-[27px] flex items-center"><Fit /><svg width="9" height="6" viewBox="0 0 9 6" className="mb-[6px] ml-[8px]"><path d="M0 0h9L4.500 6z" fill="#4aa5f5" /></svg></div>
        <div className="ml-[7px] h-full"><Slot x={76}><Kb /></Slot></div>
        <div className="h-[35px] w-px bg-[#3a3a3a]" />
        <div className="ml-[13px] flex h-full items-center">
          <Slot x={55}><Comment /></Slot>
          <Slot x={55}><Highlight /></Slot>
          <Slot x={55}><Pen /></Slot>
          <Slot x={55}><EditDoc /></Slot>
          <Slot x={55}><Trash2 size={30} strokeWidth={2} /></Slot>
          <Slot x={55}><Rotate /></Slot>
        </div>
        <div className="ml-auto mr-[6px] flex h-full items-center">
          <Slot x={55}><LinkCloud /></Slot>
          <Slot x={55}><MailBox /></Slot>
          <Slot x={55}><UserPlus /></Slot>
        </div>
      </div>
      {/* main */}
      <div className="flex min-h-0 flex-1">
        <div className="flex w-[22px] shrink-0 items-center justify-center bg-[#3e3e3e]">
          <svg width="9" height="14" viewBox="0 0 9 14"><path d="M0 0l9 7-9 7z" fill="#d0d0d0" /></svg>
        </div>
        <div className="flex min-w-0 flex-1 justify-center bg-[#262626]"><Page /></div>
        <div className="flex w-[21px] shrink-0 flex-col bg-[#141414]">
          <div className="mt-[1px] h-[9px] w-[20px] bg-[#808080]" />
          <div className="mt-[4px] flex h-[16px] justify-center text-[#777]"><ChevronUp size={16} /></div>
          <div className="mt-[140px] h-[110px] w-[20px] bg-[#4d4d4d]" />
          <div className="mb-[2px] mt-auto flex justify-center text-[#777]"><ChevronDown size={16} /></div>
        </div>
        <div className="flex w-[23px] shrink-0 items-center justify-center bg-[#3f3f3f]">
          <svg width="8" height="12" viewBox="0 0 8 12"><path d="M8 0L0 6l8 6z" fill="#d0d0d0" /></svg>
        </div>
        <RightPanel />
      </div>
      <Taskbar />
    </div>
  );
}
